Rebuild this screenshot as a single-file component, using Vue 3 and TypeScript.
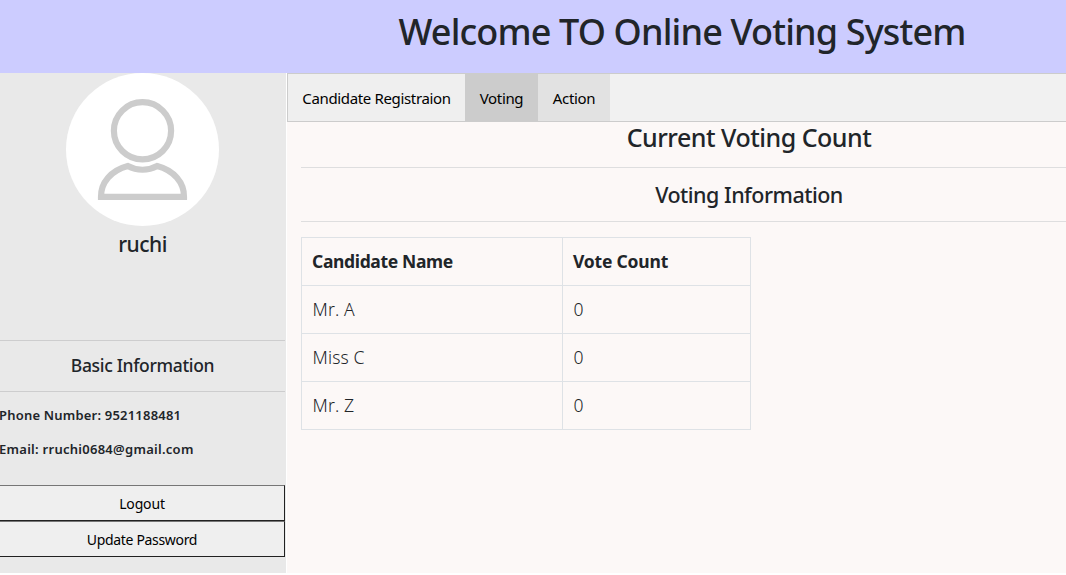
<script setup lang="ts">
interface Candidate {
  name: string
  votes: number
}

const tabs: { label: string; kind: string }[] = [
  { label: 'Candidate Registraion', kind: 'registration' },
  { label: 'Voting', kind: 'voting' },
  { label: 'Action', kind: 'action' },
]

const candidates: Candidate[] = [
  { name: 'Mr. A', votes: 0 },
  { name: 'Miss C', votes: 0 },
  { name: 'Mr. Z', votes: 0 },
]
</script>

<template>
  <div class="viewport">
    <div class="page">
      <header class="banner">
        <h1>Welcome TO Online Voting System</h1>
      </header>
      <div class="body">
        <aside class="sidebar">
          <div class="profile">
            <svg class="avatar" width="153" height="153" viewBox="0 0 153 153">
              <circle cx="76.5" cy="76.5" r="76.5" fill="#fff" />
              <g fill="none" stroke="#ccc" stroke-width="6.2">
                <circle cx="76.5" cy="57.8" r="28.6" />
                <path d="M61.8 93C45 97.500 34.800 109.500 35 123.900H118C118.200 109.500 108 97.500 91.200 93C82 98 71 98 61.800 93Z" />
              </g>
            </svg>
            <h4 class="user">ruchi</h4>
          </div>
          <h5 class="section">Basic Information</h5>
          <p class="detail phone">Phone Number: 9521188481</p>
          <p class="detail email">Email: rruchi0684@gmail.com</p>
          <div class="actions">
            <button class="logout">Logout</button>
            <button class="update">Update Password</button>
          </div>
        </aside>
        <main class="main">
          <nav class="tabs">
            <button v-for="tab in tabs" :key="tab.kind" class="tab" :class="tab.kind">{{ tab.label }}</button>
          </nav>
          <section class="content">
            <h3 class="count-title">Current Voting Count</h3>
            <h4 class="info-title">Voting Information</h4>
            <table class="votes">
              <thead>
                <tr><th class="name-col">Candidate Name</th><th class="count-col">Vote Count</th></tr>
              </thead>
              <tbody>
                <tr v-for="c in candidates" :key="c.name"><td>{{ c.name }}</td><td>{{ c.votes }}</td></tr>
              </tbody>
            </table>
          </section>
        </main>
      </div>
    </div>
  </div>
</template>

<style>
body { margin: 0; background: #fff; }
</style>

<style scoped>
* { box-sizing: border-box; }
.viewport {
  width: 100%;
  height: 575px;
  overflow: hidden;
  background: #fff;
  color: #212529;
  font-family: "Segoe UI", "Noto Sans", "Open Sans", sans-serif;
}
.page { width: 1364px; }
h1, h3, h4, h5, p { margin: 0; font-weight: 500; white-space: nowrap; }
.banner { height: 73px; background: #ccf; text-align: center; }
h1 { font-size: 36px; line-height: 63px; letter-spacing: -0.85px; }
.body { display: flex; gap: 1px; height: 500px; }
.sidebar { width: 286px; background: #e9e9e9; padding-right: 1px; }
.profile { height: 267px; text-align: center; }
.avatar { display: block; margin: 0 auto; }
.user { font-size: 21px; line-height: 36px; letter-spacing: -0.5px; }
.section {
  height: 52px;
  border-top: 1px solid #cdcdce;
  border-bottom: 1px solid #cdcdce;
  text-align: center;
  font-size: 17.500px;
  line-height: 49px;
  letter-spacing: -0.33px;
}
.detail { font-size: 13px; line-height: 20px; font-weight: 600; margin-left: -1px; letter-spacing: 0.2px; }
.phone { margin-top: 13px; }
.email { margin-top: 14px; letter-spacing: 0.27px; }
.actions { display: flex; flex-direction: column; margin-top: 26px; margin-left: -1px; }
button { margin: 0; font-family: inherit; font-weight: 400; color: #000; background: #efefef; border-radius: 0; white-space: nowrap; }
.actions button {
  height: 36px;
  padding: 0;
  border: 1px solid #212121;
  border-top-color: #767676;
  font-size: 14px;
  letter-spacing: -0.33px;
}
.actions .logout { letter-spacing: -0.15px; }
.main { flex: 1; background: #fcf8f7; }
.tabs { display: flex; height: 49px; border: 1px solid #ccc; background: #f1f1f1; }
.tab { height: 48px; margin-bottom: -1px; border: 0; padding: 0 0 1px; font-size: 15px; letter-spacing: -0.35px; }
.registration { width: 177px; height: 47px; padding-bottom: 0; }
.voting { width: 73px; background: #ccc; }
.action { width: 72px; height: 47px; background: #e2e2e2; padding-bottom: 0; }
.content { margin-left: 14px; width: 896px; }
.count-title { height: 46px; border-bottom: 1px solid #dededf; text-align: center; font-size: 25px; line-height: 31px; letter-spacing: -0.5px; }
.info-title { height: 54px; border-bottom: 1px solid #dededf; text-align: center; font-size: 21.500px; line-height: 54px; letter-spacing: -0.5px; }
.votes { margin-top: 15px; width: 450px; table-layout: fixed; border-collapse: collapse; font-size: 17.500px; font-weight: 350; }
.votes th, .votes td { height: 48px; padding: 0 10px 2px; border: 1px solid #dee2e6; text-align: left; line-height: 26px; }
.votes td { padding-left: 10.5px; font-kerning: none; letter-spacing: 0.15px; }
.name-col { width: 261px; }
.votes th { font-weight: 700; letter-spacing: -0.35px; }
.votes .count-col { letter-spacing: -0.2px; }
</style>
